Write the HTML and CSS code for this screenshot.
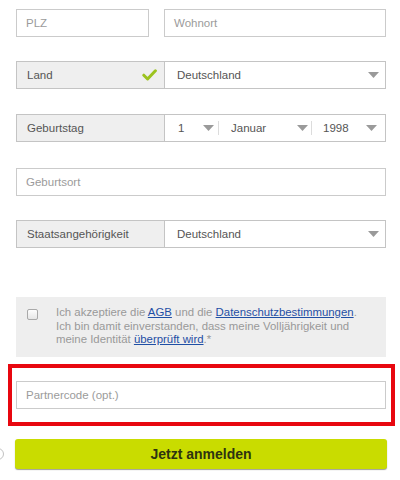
FILE: index.html
```html
<!DOCTYPE html>
<html lang="de">
<head>
<meta charset="utf-8">
<title>Registrierung</title>
<link rel="stylesheet" href="styles.css">
</head>
<body>
<div class="page">
  <div class="row r1">
    <div class="field plz">PLZ</div>
    <div class="field ort">Wohnort</div>
  </div>

  <div class="combo r2">
    <div class="label">Land
      <svg class="check" width="15" height="12" viewBox="0 0 15 12"><path d="M1.8 6.2 L5.6 10 L13.4 1.8" fill="none" stroke="#9cc31f" stroke-width="3" stroke-linecap="round" stroke-linejoin="round"/></svg>
    </div>
    <div class="select land">Deutschland
      <svg class="arrow" width="11" height="6" viewBox="0 0 11 6"><polygon points="0,0 11,0 5.5,6" fill="#9a9a9a"/></svg>
    </div>
  </div>

  <div class="combo r3">
    <div class="label">Geburtstag</div>
    <div class="dsel day">1
      <svg class="arrow" width="11" height="6" viewBox="0 0 11 6"><polygon points="0,0 11,0 5.5,6" fill="#9a9a9a"/></svg>
    </div>
    <div class="sep"></div>
    <div class="dsel month">Januar
      <svg class="arrow" width="11" height="6" viewBox="0 0 11 6"><polygon points="0,0 11,0 5.5,6" fill="#9a9a9a"/></svg>
    </div>
    <div class="sep"></div>
    <div class="dsel year">1998
      <svg class="arrow" width="11" height="6" viewBox="0 0 11 6"><polygon points="0,0 11,0 5.5,6" fill="#9a9a9a"/></svg>
    </div>
  </div>

  <div class="field full r4">Geburtsort</div>

  <div class="combo r5">
    <div class="label">Staatsangehörigkeit</div>
    <div class="select land">Deutschland
      <svg class="arrow" width="11" height="6" viewBox="0 0 11 6"><polygon points="0,0 11,0 5.5,6" fill="#9a9a9a"/></svg>
    </div>
  </div>

  <div class="consent">
    <span class="cbox"></span>
    <p class="ctext">Ich akzeptiere die <a href="#">AGB</a> und die <a href="#">Datenschutzbestimmungen</a>.<br>Ich bin damit einverstanden, dass meine Volljährigkeit und<br>meine Identität <a href="#">überprüft wird</a>.*</p>
  </div>

  <div class="partner">
    <div class="field full">Partnercode (opt.)</div>
  </div>

  <button class="submit">Jetzt anmelden</button>
</div>
<span class="edge"></span>
</body>
</html>
```

FILE: styles.css
```css
html, body {
  margin: 0;
  padding: 0;
  background: #fff;
}
body {
  font-family: "Liberation Sans", Arial, sans-serif;
  position: relative;
  width: 400px;
  height: 480px;
  overflow: hidden;
}
.page {
  padding: 9px 0 0 16px;
  width: 370px;
}
.row {
  display: flex;
  gap: 15px;
}
.field {
  box-sizing: border-box;
  height: 28px;
  border: 1px solid #cbcbcb;
  padding-left: 9px;
  display: flex;
  align-items: center;
  font-size: 11.5px;
  color: #9b9b9b;
  background: #fff;
}
.plz { width: 133px; }
.ort { flex: 1; }
.full { width: 370px; }

.r1 { margin-bottom: 24px; }
.r2 { margin-bottom: 25px; }
.r3 { margin-bottom: 26px; }
.r4 { margin-bottom: 24px; }

.combo {
  box-sizing: border-box;
  height: 28px;
  border: 1px solid #c4c4c4;
  display: flex;
  align-items: stretch;
  font-size: 11.5px;
  color: #555;
}
.label {
  box-sizing: border-box;
  width: 148px;
  background: #efefef;
  border-right: 1px solid #c4c4c4;
  padding: 0 7px 0 10px;
  display: flex;
  align-items: center;
  justify-content: space-between;
}
.check { display: block; }
.select {
  flex: 1;
  display: flex;
  align-items: center;
  justify-content: space-between;
  padding: 0 6px 0 12px;
  background: #fff;
}
.arrow { display: block; }
.dsel {
  box-sizing: border-box;
  display: flex;
  align-items: center;
  justify-content: space-between;
}
.day { width: 53px; padding: 0 4px 0 13px; }
.month { width: 92px; padding: 0 3px 0 12px; }
.year { flex: 1; padding: 0 8px 0 11px; }
.sep {
  width: 1px;
  height: 14px;
  align-self: center;
  background: #dcdcdc;
}

.consent {
  margin-top: 49px;
  box-sizing: border-box;
  height: 60px;
  background: #eeeeee;
  padding: 9px 10px 0 11px;
  display: flex;
  align-items: flex-start;
}
.cbox {
  box-sizing: border-box;
  width: 11px;
  height: 11px;
  margin: 3px 18px 0 0;
  border: 1px solid #a9a9a9;
  border-radius: 2px;
  background: linear-gradient(#fdfdfd, #e6e6e6);
  flex: none;
}
.ctext {
  margin: 0;
  font-size: 11.4px;
  line-height: 13.5px;
  color: #999;
  white-space: nowrap;
}
.ctext a {
  color: #1f4fa5;
  text-decoration: underline;
}

.partner {
  margin: 7px -9px 0 -8px;
  border: 4px solid #e8070f;
  padding: 13px 5px 13px 4px;
  background: #fff;
}

.submit {
  display: block;
  margin: 13px 0 0 -1px;
  width: 372px;
  height: 30px;
  border: none;
  border-radius: 3px;
  background: #c9dc00;
  box-shadow: 0 1px 1px rgba(80, 80, 60, 0.55);
  font-family: "Liberation Sans", Arial, sans-serif;
  font-weight: bold;
  font-size: 14px;
  color: #2e3410;
  padding: 0;
  cursor: pointer;
}

.edge {
  position: absolute;
  left: -8px;
  top: 448px;
  width: 10px;
  height: 10px;
  border: 1px solid #c2c2c2;
  border-radius: 50%;
}
```
